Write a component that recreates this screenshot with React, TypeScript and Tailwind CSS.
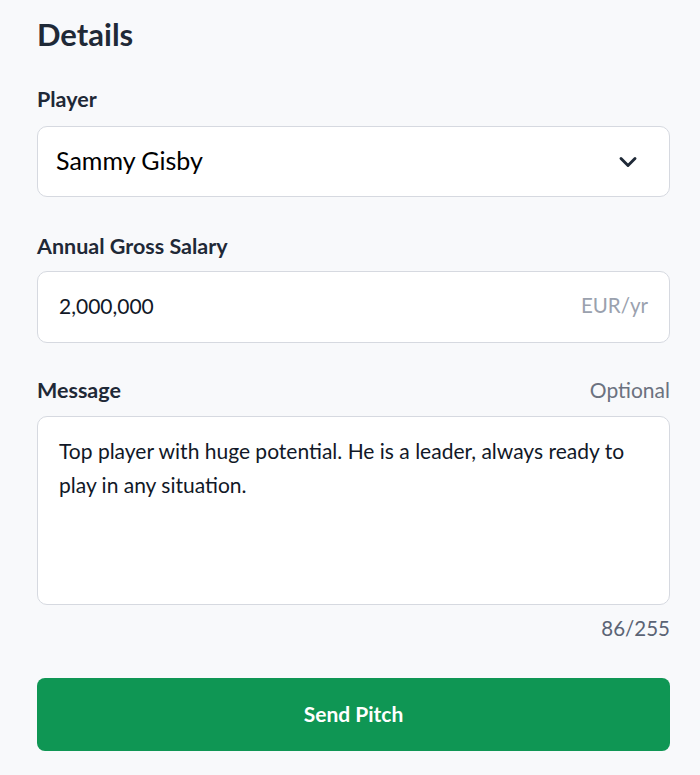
import { ChevronDown } from 'lucide-react';

export default function App() {
  const message =
    'Top player with huge potential. He is a leader, always ready to play in any situation.';

  return (
    <div className="min-h-[775px] w-[700px] bg-[#f8f9fb] pl-[37px] pr-[30px] pt-[14px] font-['Lato',sans-serif] text-[#1f2937]">
      <h2 className="text-[31px] font-bold leading-[40px]">Details</h2>

      {/* Player select */}
      <label className="mt-[32px] block text-[21.5px] font-bold leading-[26px]">Player</label>
      <div className="mt-[14px] flex h-[71px] items-center justify-between rounded-[10px] border border-[#d6d9e0] bg-white pl-[18px] pr-[27px]">
        <span className="mb-[3px] text-[25px] leading-none text-black">Sammy Gisby</span>
        <ChevronDown className="h-[28px] w-[28px] text-[#1f2937]" strokeWidth={2.5} />
      </div>

      {/* Salary */}
      <label className="mt-[36px] block text-[21.5px] font-bold leading-[26px]">Annual Gross Salary</label>
      <div className="mt-[12px] flex h-[72px] items-center justify-between rounded-[10px] border border-[#d6d9e0] bg-white pl-[21px] pr-[21px]">
        <span className="mb-[3px] text-[21px] leading-none text-[#111827]">2,000,000</span>
        <span className="mb-[3px] text-[20.5px] leading-none text-[#9aa1ae]">EUR/yr</span>
      </div>

      {/* Message */}
      <div className="mt-[34px] flex items-baseline justify-between">
        <label className="text-[21.5px] font-bold leading-[26px]">Message</label>
        <span className="text-[21px] leading-[26px] text-[#6b7280]">Optional</span>
      </div>
      <div className="mt-[13px] h-[189px] rounded-[10px] border border-[#d6d9e0] bg-white px-[21px] pt-[17px]">
        <p className="text-[21px] leading-[34px] text-[#111827]">{message}</p>
      </div>
      <p className="mt-[11px] text-right text-[20.5px] leading-[24px] text-[#5b6475]">86/255</p>

      <button className="mt-[38px] flex h-[73px] w-full items-center justify-center rounded-[8px] bg-[#0f9654] pb-[2px] text-[21px] font-bold text-white">
        Send Pitch
      </button>
    </div>
  );
}
